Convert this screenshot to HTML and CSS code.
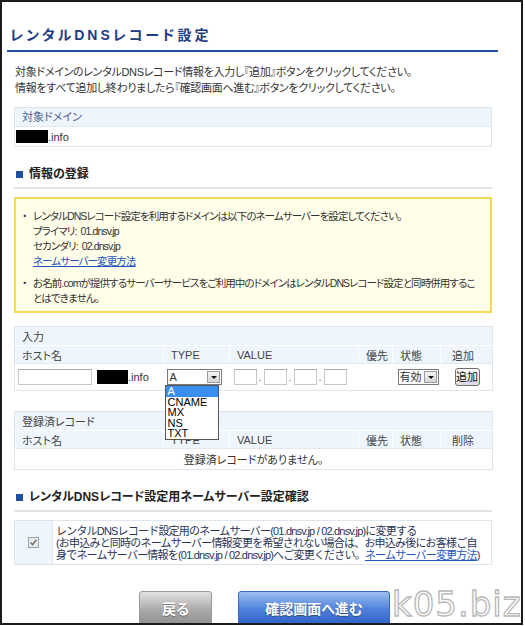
FILE: index.html
```html
<!DOCTYPE html>
<html lang="ja">
<head>
<meta charset="utf-8">
<title>レンタルDNSレコード設定</title>
<link rel="stylesheet" href="styles.css">
</head>
<body>
<div class="frame">
  <div class="head"><h1 class="title">レンタルDNSレコード設定</h1></div>
  <div class="content">
    <p class="intro">対象ドメインのレンタルDNSレコード情報を入力し『追加』ボタンをクリックしてください。<br>情報をすべて追加し終わりましたら『確認画面へ進む』ボタンをクリックしてください。</p>

    <div class="box domain">
      <div class="box-head">対象ドメイン</div>
      <div class="box-row"><span class="mask"></span>.info</div>
    </div>

    <h2 class="sec"><span class="sq"></span>情報の登録</h2>

    <div class="notice">
      <div class="item">
        <span class="dot">・</span>
        <div class="itxt">レンタルDNSレコード設定を利用するドメインは以下のネームサーバーを設定してください。<br>プライマリ:&nbsp; 01.dnsv.jp<br>セカンダリ:&nbsp; 02.dnsv.jp<br><a class="link" href="#">ネームサーバー変更方法</a></div>
      </div>
      <div class="item second">
        <span class="dot">・</span>
        <div class="itxt">お名前.comが提供するサーバーサービスをご利用中のドメインはレンタルDNSレコード設定と同時併用するこ<br>とはできません。</div>
      </div>
    </div>

    <table class="grid entry">
      <colgroup><col class="c1"><col class="c2"><col class="c3"><col class="c4"><col class="c5"><col class="c6"></colgroup>
      <tr class="cap"><td colspan="6">入力</td></tr>
      <tr class="hd"><td>ホスト名</td><td>TYPE</td><td>VALUE</td><td>優先</td><td>状態</td><td class="last">追加</td></tr>
      <tr class="data">
        <td class="hostcell"><span class="txtin host"></span><span class="mask small"></span><span class="suffix">.info</span></td>
        <td class="typecell">
          <div class="sel type"><span class="selv">A</span><span class="arrow"></span>
            <ul class="drop">
              <li class="on">A</li><li>CNAME</li><li>MX</li><li>NS</li><li>TXT</li>
            </ul>
          </div>
        </td>
        <td class="valcell"><span class="txtin ip"></span><span class="pt">.</span><span class="txtin ip"></span><span class="pt">.</span><span class="txtin ip"></span><span class="pt">.</span><span class="txtin ip"></span></td>
        <td></td>
        <td class="stcell"><div class="sel st"><span class="selv">有効</span><span class="arrow"></span></div></td>
        <td class="addcell"><span class="addbtn">追加</span></td>
      </tr>
    </table>

    <table class="grid reg">
      <colgroup><col class="c1"><col class="c2"><col class="c3"><col class="c4"><col class="c5"><col class="c6"></colgroup>
      <tr class="cap"><td colspan="6">登録済レコード</td></tr>
      <tr class="hd"><td>ホスト名</td><td>TYPE</td><td>VALUE</td><td>優先</td><td>状態</td><td class="last">削除</td></tr>
      <tr class="empty"><td colspan="6">登録済レコードがありません。</td></tr>
    </table>

    <h2 class="sec sec2"><span class="sq"></span>レンタルDNSレコード設定用ネームサーバー設定確認</h2>

    <div class="confirm">
      <div class="cb-cell">
        <svg class="cb" width="11" height="11" viewBox="0 0 11 11"><rect x="0.5" y="0.5" width="10" height="10" fill="#e9e9e9" stroke="#9aa4b0"/><path d="M2.6 5.4 L4.5 7.6 L8.4 2.8" fill="none" stroke="#6b6b6b" stroke-width="1.4"/></svg>
      </div>
      <div class="cf-text">レンタルDNSレコード設定用のネームサーバー(01.dnsv.jp / 02.dnsv.jp)に変更する<br>(お申込みと同時のネームサーバー情報変更を希望されない場合は、お申込み後にお客様ご自<br>身でネームサーバー情報を(01.dnsv.jp / 02.dnsv.jp)へご変更ください。<a class="link" href="#">ネームサーバー変更方法</a>)</div>
    </div>

    <div class="buttons">
      <span class="btn back">戻る</span>
      <span class="btn next">確認画面へ進む</span>
    </div>
  </div>
  <div class="wm">k05.biz</div>
</div>
</body>
</html>
```

FILE: styles.css
```css
* { box-sizing: border-box; }
html, body { margin: 0; padding: 0; background: #fff; }
body {
  font-family: "Liberation Sans", "Noto Sans CJK JP", sans-serif;
  font-size: 11px;
  color: #333;
  font-feature-settings: "palt";
}
.frame {
  position: relative;
  width: 523px;
  height: 625px;
  border: 2px solid #1c1c1c;
  overflow: hidden;
  background: #fff;
}
.head {
  height: 50px;
  margin: 0 23px 0 5px;
  border-bottom: 2px solid #20509e;
  display: flex;
  align-items: flex-end;
  padding-bottom: 7px;
}
.title {
  margin: 0 0 0 3px;
  font-size: 14px;
  line-height: 16px;
  font-weight: bold;
  letter-spacing: 3px;
  color: #1d3d82;
}
.content {
  margin-left: 12px;
  width: 478px;
}
.intro {
  margin: 12px 0 0 1px;
  line-height: 16px;
  color: #333;
  letter-spacing: -0.3px;
}
.box {
  margin-top: 11px;
  border: 1px solid #dfe5ec;
}
.box-head {
  height: 19px;
  line-height: 18px;
  padding-left: 7px;
  background: #eef5fc;
  border-bottom: 1px solid #e3e8ee;
  color: #4a6191;
}
.box-row {
  height: 19px;
  display: flex;
  align-items: center;
  padding-left: 1px;
}
.mask {
  display: inline-block;
  width: 32px;
  height: 13px;
  background: #000;
}
.sec {
  margin: 19px 0 0;
  padding: 0 0 5px 2px;
  border-bottom: 2px solid #e4e4e4;
  font-size: 12px;
  line-height: 16px;
  font-weight: bold;
  color: #222;
  display: flex;
  align-items: center;
}
.sq {
  width: 7px;
  height: 7px;
  background: #1f4f9f;
  margin-right: 6px;
}
.notice {
  margin-top: 8px;
  height: 116px;
  border: 2px solid #f5da55;
  background: #fffee9;
  padding: 10px 4px 6px 6px;
  line-height: 15px;
  font-size: 10.5px;
  letter-spacing: -0.9px;
}
.item { display: flex; }
.item.second { margin-top: 7px; }
.dot { width: 11px; flex: none; letter-spacing: 0; }
.itxt { white-space: nowrap; }
.link { color: #1f56c0; text-decoration: underline; }
.grid {
  width: 478px;
  border-collapse: collapse;
  table-layout: fixed;
  border: 1px solid #dfe5ec;
  margin-top: 13px;
}
.grid.reg { margin-top: 20px; }
.c1 { width: 149px; } .c2 { width: 66px; } .c3 { width: 129px; }
.c4 { width: 34px; } .c5 { width: 48px; } .c6 { width: 52px; }
.grid td { padding: 0 0 0 7px; white-space: nowrap; }
.grid .cap td {
  height: 19px;
  background: #eef5fc;
  border-bottom: 1px solid #fff;
  color: #444;
}
.grid .hd td {
  height: 18px;
  background: #eef5fc;
  border-left: 1px solid #fff;
  color: #444;
  border-bottom: 1px solid #e3e8ee;
}
.grid .hd td:first-child { border-left: none; }
.grid .hd td.last { padding-left: 11px; }
.grid .data td { height: 27px; padding: 0; }
.hostcell { padding-left: 3px !important; }
.txtin {
  display: inline-block;
  vertical-align: middle;
  height: 16px;
  border: 1px solid #c6c6c6;
  border-top-color: #a9a9a9;
  background: #fff;
}
.txtin.host { width: 74px; margin-right: 5px; }
.mask.small { width: 31px; height: 14px; vertical-align: middle; }
.suffix { vertical-align: middle; }
.typecell { padding-left: 3px !important; }
.sel {
  position: relative;
  display: inline-flex;
  align-items: center;
  height: 16px;
  border: 1px solid #7a7a7a;
  background: #fff;
  vertical-align: middle;
  font-size: 11px;
}
.sel.type { width: 55px; }
.sel.st { width: 41px; }
.selv { flex: 1; padding-left: 2px; line-height: 14px; white-space: nowrap; }
.sel.st .selv { padding-left: 1px; font-feature-settings: normal; }
.arrow {
  flex: none;
  width: 13px;
  height: 12px;
  margin-right: 1px;
  background: linear-gradient(#f4f4f4, #d6d6d6);
  border: 1px solid #9c9c9c;
  position: relative;
}
.arrow::after {
  content: "";
  position: absolute;
  left: 3px;
  top: 4px;
  border-left: 3px solid transparent;
  border-right: 3px solid transparent;
  border-top: 3px solid #111;
}
.drop {
  position: absolute;
  left: -3px;
  top: 15px;
  width: 54px;
  margin: 0;
  padding: 0;
  list-style: none;
  background: #fff;
  border: 1px solid #555;
  z-index: 5;
  font-size: 11px;
  color: #000;
}
.drop li { height: 10.4px; line-height: 10.4px; padding-left: 2px; }
.drop li.on { background: #3a8ef0; color: #fff; height: 11px; }
.valcell { padding-left: 4px !important; }
.txtin.ip { width: 23px; }
.pt { display: inline-block; width: 7px; text-align: center; vertical-align: middle; color: #666; }
.stcell { padding-left: 5px !important; }
.addcell { padding-left: 14px !important; }
.addbtn {
  display: inline-block;
  width: 25px;
  height: 18px;
  line-height: 16px;
  text-align: center;
  border: 1px solid #707070;
  border-radius: 3px;
  background: linear-gradient(#fbfbfb, #dcdcdc);
  color: #111;
}
.grid .empty td {
  height: 21px;
  text-align: center;
  padding: 0;
  color: #333;
}
.sec2 { margin-top: 19px; }
.confirm {
  margin-top: 8px;
  display: flex;
  border: 1px solid #dfe5ec;
  height: 45px;
}
.cb-cell {
  width: 38px;
  background: #eef5fc;
  border-right: 1px solid #dfe5ec;
  display: flex;
  align-items: center;
  justify-content: center;
}
.cf-text {
  padding: 4px 0 0 3px;
  line-height: 12px;
  font-size: 11px;
  color: #2a3556;
  font-feature-settings: normal;
  white-space: nowrap;
  letter-spacing: -0.8px;
}
.buttons {
  margin-top: 26px;
  padding-left: 125px;
  display: flex;
  gap: 26px;
}
.btn {
  height: 36px;
  border-radius: 3px;
  color: #fff;
  font-weight: bold;
  font-size: 14px;
  display: flex;
  align-items: center;
  justify-content: center;
  text-shadow: 0 1px 1px rgba(0,0,0,0.35);
  padding-bottom: 2px;
}
.btn.back {
  width: 73px;
  background: linear-gradient(#e2e2e2, #a8a8a8 55%, #8e8e8e);
  border: 1px solid #9a9a9a;
}
.btn.next {
  width: 152px;
  background: linear-gradient(#9fc0f0, #4f82dc 50%, #2c5fc6);
  border: 1px solid #3b68c0;
}
.wm {
  position: absolute;
  left: 390px;
  top: 582px;
  font-family: "DejaVu Sans", sans-serif;
  font-size: 34px;
  letter-spacing: 1px;
  color: #fff;
  -webkit-text-stroke: 1.3px #b8b8b8;
}
```
